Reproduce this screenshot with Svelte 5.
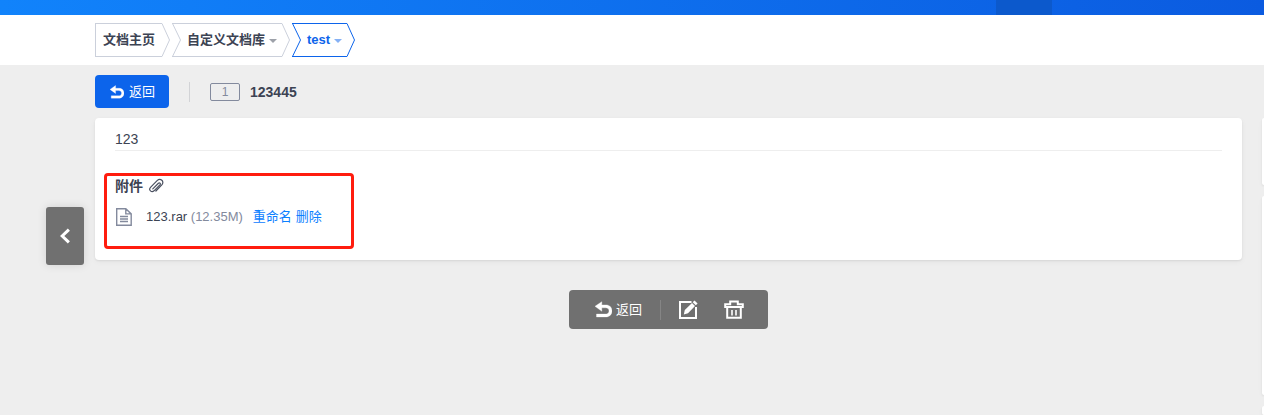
<script>
    const crumbs = [
        { label: '文档主页', menu: false },
        { label: '自定义文档库', menu: true },
        { label: 'test', menu: true, active: true }
    ];

    let doc = {
        id: 1,
        title: '123445',
        content: '123'
    };

    let files = $state([
        { name: '123.rar', size: '12.35M' }
    ]);

    function removeFile(file) {
        files = files.filter(f => f !== file);
    }
</script>

{#snippet backIcon(size)}
    <svg class="icon" width={size} height={size} viewBox="0 0 16 16">
        <path d="M6.4 0.6v3.1h3.9c3.3 0 5.7 2.2 5.7 5.6s-2.5 5.7-5.8 5.7H1.4v-2.7h8.5c2 0 3.3-1.2 3.3-3s-1.3-2.9-3.3-2.9H6.4v3.3L0 5z" fill="currentColor" stroke="currentColor" stroke-width="0.3" />
    </svg>
{/snippet}

<div class="layout">
    <header class="topbar">
        <a class="topbar-tab" href="#doc" aria-label="文档"></a>
    </header>

    <nav class="crumbs">
        {#each crumbs as crumb, i}
            <a class="crumb" class:active={crumb.active} href="#crumb{i}">
                {#if i > 0}
                    <svg class="edge" width="9" height="34" viewBox="0 0 9 34">
                        <path d="M0.5 0.5L8.5 17L0.5 33.5" />
                    </svg>
                {/if}
                <span class="crumb-body" class:first={i === 0}>
                    {crumb.label}
                    {#if crumb.menu}<i class="caret"></i>{/if}
                </span>
                <svg class="edge" width="8" height="34" viewBox="0 0 8 34">
                    <path d="M0 0.5L7.5 17L0 33.5" />
                </svg>
            </a>
        {/each}
    </nav>

    <div class="heading">
        <button class="btn-back" type="button">{@render backIcon(14)}返回</button>
        <span class="divider"></span>
        <span class="label-id">{doc.id}</span>
        <h1>{doc.title}</h1>
    </div>

    <div class="page">
        <div class="gutter">
            <button class="btn-prev" type="button" aria-label="上一页">
                <svg width="12" height="16" viewBox="0 0 12 16">
                    <path d="M8.8 2.6L3.2 8l5.6 5.4" fill="none" stroke="#fff" stroke-width="3" stroke-linecap="square" />
                </svg>
            </button>
        </div>

        <main>
            <section class="card">
                <div class="content">{doc.content}</div>
                <div class="files">
                    <h2>
                        附件
                        <svg width="16" height="16" viewBox="0 0 16 16">
                            <path d="M4.8 10.9l5.6-5.6c1.2-1.1 2.6.3 1.5 1.5l-5.9 6c-2.4 2.2-5.8-.9-3.5-3.4l6.6-6.8c3.3-3.1 7.8.9 4.7 4.3l-5.9 6.1" fill="none" stroke="#4a5060" stroke-width="1.2" stroke-linecap="round" />
                        </svg>
                    </h2>
                    <ul>
                        {#each files as file}
                            <li>
                                <svg class="file-icon" width="17" height="18" viewBox="0 0 17 18">
                                    <path d="M1.7 0.7h9.1l5.4 5.2v11.4H1.7zM10.8 0.7v5.2h5.4M5 8.5h8M5 11h8M5 13.5h8" fill="none" stroke="#838a9d" stroke-width="1.4" />
                                </svg>
                                <a class="file-name" href="#file">{file.name} <span>({file.size})</span></a>
                                <button type="button">重命名</button>
                                <button type="button" onclick={() => removeFile(file)}>删除</button>
                            </li>
                        {/each}
                    </ul>
                </div>
            </section>

            <div class="toolbar">
                <button class="tool-back" type="button">{@render backIcon(17)}返回</button>
                <span class="tool-divider"></span>
                <button class="tool" type="button" aria-label="编辑">
                    <svg width="20" height="20" viewBox="0 0 20 20">
                        <path d="M13.5 2H2v16h16V7" fill="none" stroke="#fff" stroke-width="2" />
                        <path d="M5.8 14.4l1-4.4L14 3l3 3-7 7.2zM14.7 2.3L16.5 0.6 19.6 3.6 17.8 5.3z" fill="#fff" />
                    </svg>
                </button>
                <button class="tool" type="button" aria-label="删除">
                    <svg width="20" height="20" viewBox="0 0 20 20">
                        <path d="M1.2 7V4.2h5V1.6h7.6v2.6h5V7z" fill="none" stroke="#fff" stroke-width="2" />
                        <path d="M3.2 7v10.8h13.6V7" fill="none" stroke="#fff" stroke-width="2" />
                        <path d="M8 10v5.5M12 10v5.5" stroke="#fff" stroke-width="1.6" />
                    </svg>
                </button>
            </div>
        </main>

        <aside>
            <div class="side-card history"></div>
            <div class="side-card info"></div>
            <div class="side-card rest"></div>
        </aside>
    </div>
</div>

<style>
    :global(body) {
        background: #eee;
        color: #3c4353;
        font: 13px/20px "Liberation Sans", "Noto Sans CJK SC", sans-serif;
    }

    a {
        color: inherit;
        text-decoration: none;
    }

    button {
        padding: 0;
        border: 0;
        background: none;
        color: inherit;
        font: inherit;
        cursor: pointer;
    }

    svg {
        flex: none;
    }

    .layout {
        display: flex;
        flex-direction: column;
        min-height: 100vh;
    }

    .topbar {
        display: flex;
        justify-content: flex-end;
        height: 15px;
        padding-right: 212px;
        background: linear-gradient(90deg, #1183fb, #0b5be0);
    }

    .topbar-tab {
        width: 56px;
        background: #0c59cc;
    }

    .crumbs {
        display: flex;
        gap: 2px;
        padding: 8px 95px;
        background: #fff;
    }

    .crumb {
        display: flex;
        height: 34px;
        font-weight: bold;
        --edge: #cbd0db;
        background: linear-gradient(var(--edge), var(--edge)) 0 0 / calc(100% - 8px) 1px no-repeat,
            linear-gradient(var(--edge), var(--edge)) 0 100% / calc(100% - 8px) 1px no-repeat;
    }

    .crumb.active {
        --edge: #0c64eb;
        color: #0c64eb;
    }

    .edge path {
        fill: none;
        stroke: var(--edge);
    }

    .crumb-body {
        display: flex;
        align-items: center;
        gap: 4px;
        padding: 0 5px 0 6px;
    }

    .crumb-body.first {
        border-left: 1px solid var(--edge);
        padding: 0 7px;
    }

    .caret {
        border: 4px solid transparent;
        border-top-color: currentColor;
        border-bottom: 0;
        margin-top: 2px;
        opacity: 0.5;
    }

    .heading {
        display: flex;
        align-items: center;
        padding: 10px 95px;
    }

    .btn-back {
        display: flex;
        align-items: center;
        gap: 5px;
        height: 33px;
        padding: 0 14px 0 15px;
        border-radius: 4px;
        background: #0c64eb;
        color: #fff;
    }

    .divider {
        width: 1px;
        height: 20px;
        margin: 0 20px;
        background: #d2d3d6;
    }

    .label-id {
        box-sizing: border-box;
        width: 30px;
        height: 18px;
        border: 1px solid #838a9d;
        border-radius: 2px;
        color: #838a9d;
        font-size: 12px;
        line-height: 16px;
        text-align: center;
    }

    h1 {
        margin: 0 0 0 10px;
        font-size: 14px;
        line-height: 20px;
    }

    .page {
        display: flex;
        flex: 1;
    }

    .gutter {
        box-sizing: border-box;
        flex: none;
        width: 95px;
        padding: 89px 11px 0 46px;
    }

    .btn-prev {
        display: flex;
        align-items: center;
        justify-content: center;
        width: 38px;
        height: 58px;
        border-radius: 3px;
        background: #707070;
        box-shadow: 0 0 10px rgba(0, 0, 0, 0.12);
    }

    main {
        flex: 1;
        min-width: 0;
    }

    .card,
    .side-card {
        background: #fff;
        box-shadow: 0 1px 2px rgba(0, 0, 0, 0.08), 0 2px 6px rgba(0, 0, 0, 0.04);
    }

    .card {
        padding: 11px 20px;
        border-radius: 4px;
    }

    .content {
        padding-bottom: 1px;
        border-bottom: 1px solid #eee;
        font-size: 14px;
    }

    /* highlighted attachment block hangs a little outside the text column */
    .files {
        box-sizing: border-box;
        width: 250px;
        margin: 22px 0 0 -11px;
        padding: 0 0 19px 8px;
        border: 3px solid #ff1c0e;
        border-radius: 4px;
    }

    h2 {
        display: flex;
        align-items: center;
        gap: 5px;
        margin: 0;
        font-size: 14px;
        line-height: 20px;
    }

    ul {
        margin: 11px 0 0;
        padding: 0;
        list-style: none;
    }

    li {
        display: flex;
        align-items: center;
        gap: 4px;
    }

    .file-name {
        margin: 0 6px 0 10px;
    }

    .file-name span {
        color: #838a9d;
    }

    li button {
        color: #0c80ff;
    }

    .toolbar {
        display: flex;
        align-items: center;
        width: max-content;
        height: 39px;
        margin: 30px auto 0;
        padding: 0 24px 0 26px;
        border-radius: 4px;
        background: #707070;
        color: #fff;
    }

    .tool-back {
        display: flex;
        align-items: center;
        gap: 4px;
    }

    .tool-divider {
        width: 1px;
        height: 20px;
        margin: 0 17px 0 18px;
        background: #858585;
    }

    .tool {
        display: flex;
    }

    .tool + .tool {
        margin-left: 26px;
    }

    /* collapsed side column, only its left edge shows */
    aside {
        display: flex;
        flex-direction: column;
        flex: none;
        gap: 11px;
        width: 2px;
        margin-left: 20px;
    }

    .side-card {
        border-radius: 4px 0 0 4px;
    }

    .side-card.history {
        height: 67px;
    }

    .side-card.info {
        height: 199px;
    }

    .side-card.rest {
        flex: 1;
    }
</style>
